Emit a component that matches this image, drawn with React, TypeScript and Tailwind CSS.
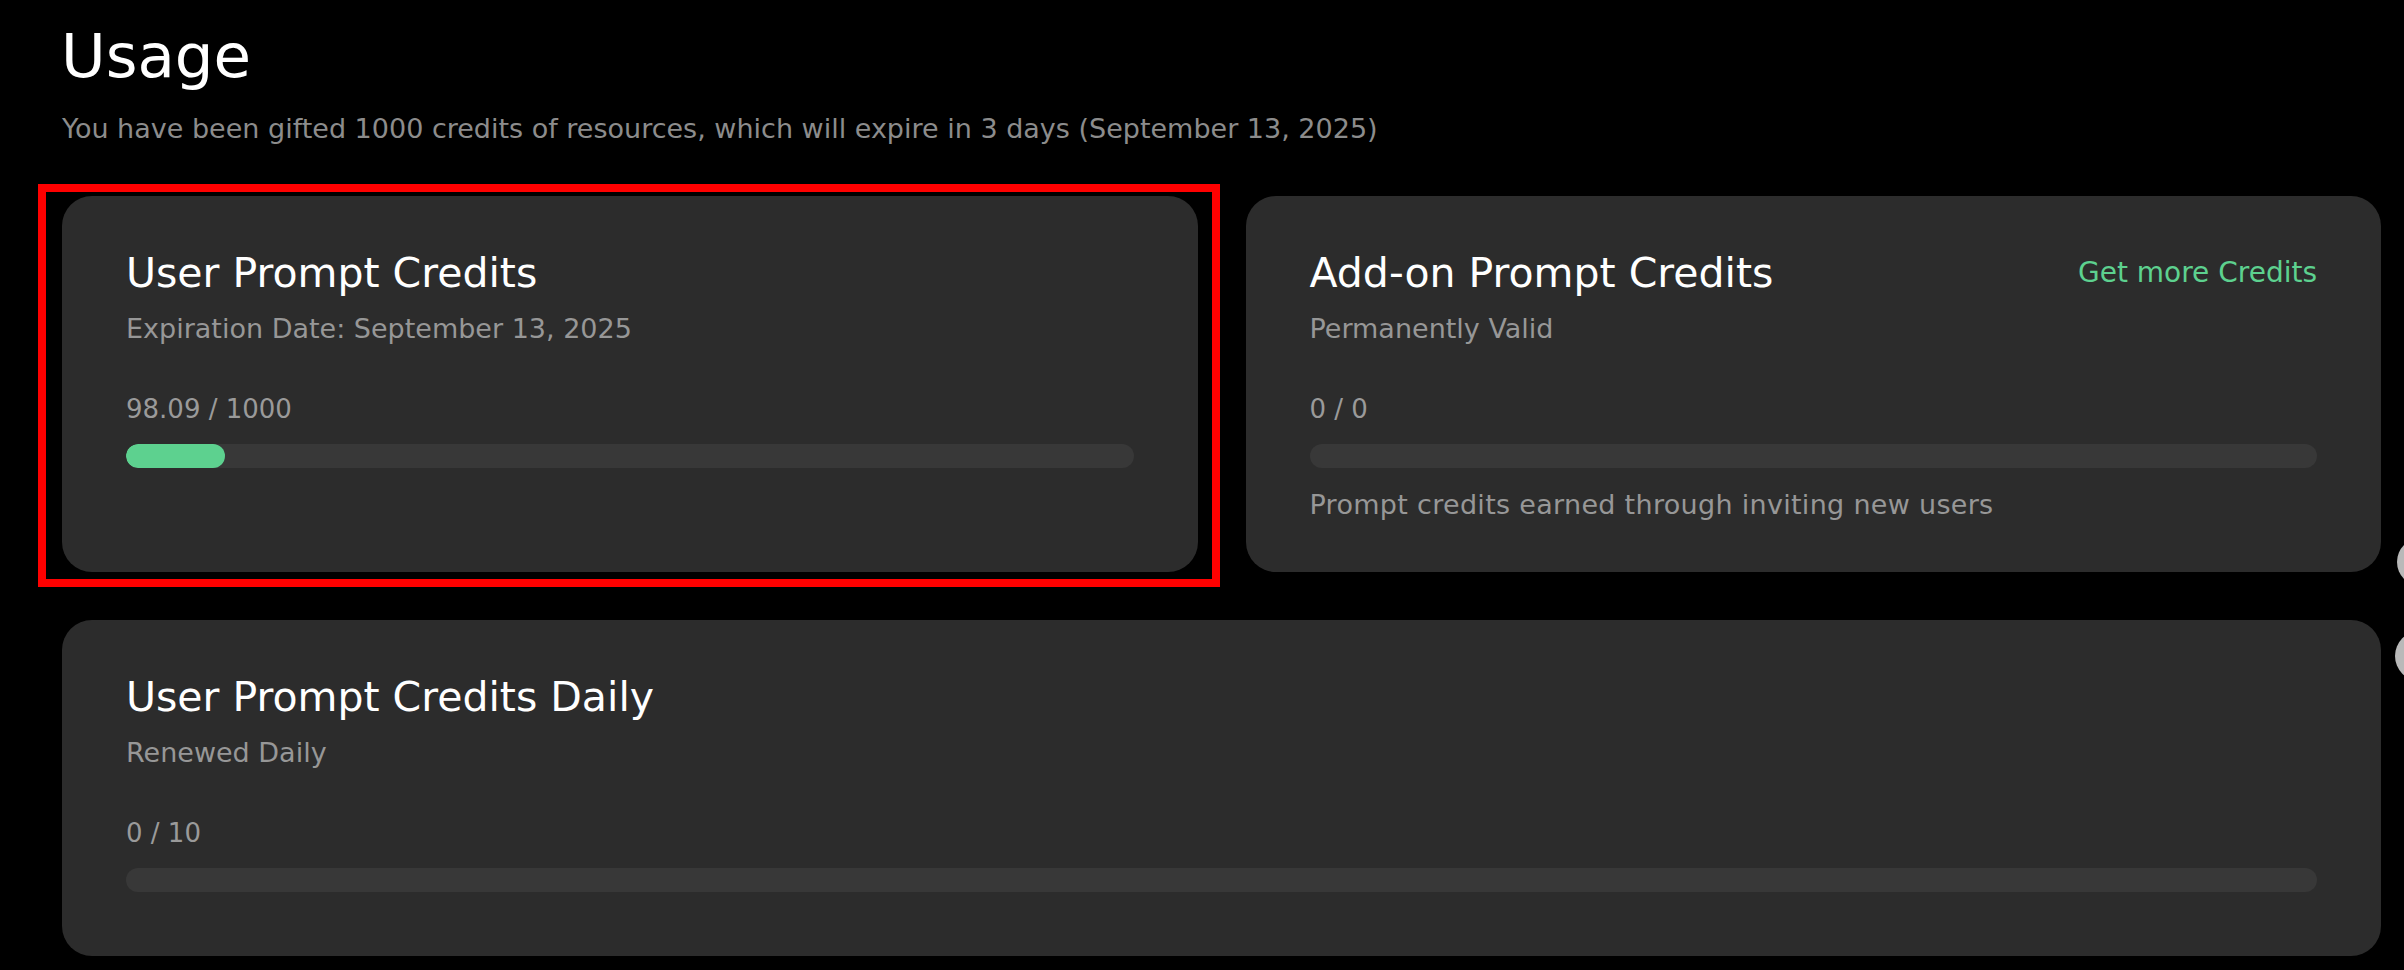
import React from "react";

type CardProps = {
  title: string;
  subtitle: string;
  used: string;
  total: string;
  percent: number;
  link?: string;
  note?: string;
  bottomPad: string;
};

function ProgressBar({ percent }: { percent: number }) {
  return (
    <div className="mt-[17px] h-6 w-full overflow-hidden rounded-full bg-[#383838]">
      {percent > 0 && (
        <div
          className="h-full rounded-full bg-[#5dd18f]"
          style={{ width: `${percent}%` }}
        />
      )}
    </div>
  );
}

function Card({ title, subtitle, used, total, percent, link, note, bottomPad }: CardProps) {
  return (
    <div className={`h-full rounded-[30px] bg-[#2c2c2c] px-16 pt-[53px] ${bottomPad}`}>
      <div className="flex items-center justify-between">
        <h2 className="text-[41px] leading-[48px] text-white">{title}</h2>
        {link && (
          <a className="cursor-pointer text-[28px] leading-[36px] text-[#5dd18f]">{link}</a>
        )}
      </div>
      <p className="mt-[14px] text-[27px] leading-[36px] text-[#979797]">{subtitle}</p>
      <p className="mt-[44px] text-[26px] leading-[36px] text-[#9a9a9a]">
        {used} / {total}
      </p>
      <ProgressBar percent={percent} />
      {note && (
        <p className="mt-[19px] text-[27px] leading-[36px] tracking-[0.3px] text-[#979797]">{note}</p>
      )}
    </div>
  );
}

export default function App() {
  return (
    <div className="relative min-h-screen w-full overflow-hidden bg-black pl-[62px] pr-[23px] pt-[21px] font-['DejaVu_Sans',sans-serif]">
      <h1 className="-ml-[1px] text-[61px] leading-[70px] text-white">Usage</h1>
      <p className="mt-[20px] text-[27px] leading-[36px] text-[#8c8c8c]">
        You have been gifted 1000 credits of resources, which will expire in 3 days (September 13, 2025)
      </p>

      <div className="mt-[49px] grid grid-cols-2 gap-[48px]">
        <div className="relative">
          <Card
            title="User Prompt Credits"
            subtitle="Expiration Date: September 13, 2025"
            used="98.09"
            total="1000"
            percent={9.809}
            bottomPad="pb-[49px]"
          />
          <div className="pointer-events-none absolute -bottom-[15px] -left-[24px] -right-[22px] -top-[12px] border-[8px] border-[#ff0000]" />
        </div>
        <Card
          title="Add-on Prompt Credits"
          subtitle="Permanently Valid"
          used="0"
          total="0"
          percent={0}
          link="Get more Credits"
          note="Prompt credits earned through inviting new users"
          bottomPad="pb-[49px]"
        />
      </div>

      <div className="mt-[48px]">
        <Card
          title="User Prompt Credits Daily"
          subtitle="Renewed Daily"
          used="0"
          total="10"
          percent={0}
          bottomPad="pb-16"
        />
      </div>

      <div className="absolute left-[2397px] top-[538px] h-[48px] w-[48px] rounded-full bg-[#b9b9b9]" />
      <div className="absolute left-[2395px] top-[631px] h-[50px] w-[50px] rounded-full bg-[#b9b9b9]" />
    </div>
  );
}
